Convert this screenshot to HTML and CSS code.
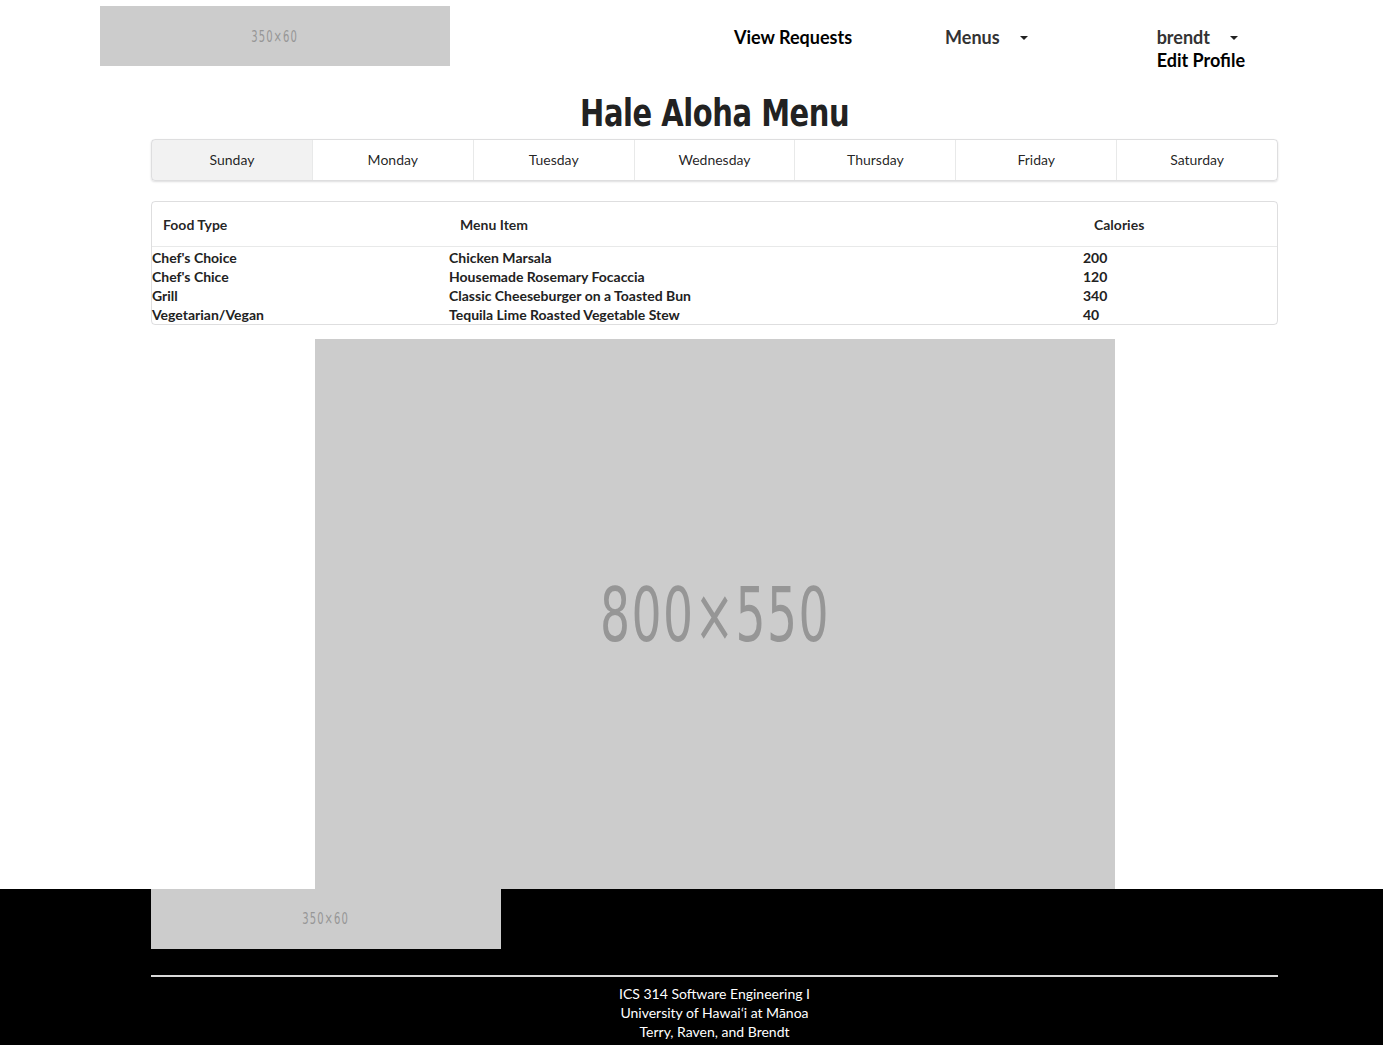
FILE: index.html
```html
<!DOCTYPE html>
<html lang="en">
<head>
<meta charset="utf-8">
<title>Hale Aloha Menu</title>
<link rel="stylesheet" href="styles.css">
</head>
<body>
<header class="topbar">
  <div class="placeholder logo"><span class="ph-text">350×60</span></div>
  <nav class="nav">
    <a class="nav-link strong" href="#">View Requests</a>
    <div class="nav-drop">
      <span class="drop-label">Menus</span>
      <span class="caret"></span>
    </div>
    <div class="nav-user">
      <div class="nav-drop">
        <span class="drop-label">brendt</span>
        <span class="caret"></span>
      </div>
      <a class="nav-link strong" href="#">Edit Profile</a>
    </div>
  </nav>
</header>

<main class="container">
  <h1 class="title"><span class="title-text">Hale Aloha Menu</span></h1>
  <div class="days">
    <a class="day active" href="#">Sunday</a>
    <a class="day" href="#">Monday</a>
    <a class="day" href="#">Tuesday</a>
    <a class="day" href="#">Wednesday</a>
    <a class="day" href="#">Thursday</a>
    <a class="day" href="#">Friday</a>
    <a class="day" href="#">Saturday</a>
  </div>

  <table class="menu-table">
    <colgroup>
      <col class="c1"><col class="c2"><col class="c3">
    </colgroup>
    <thead>
      <tr><th>Food Type</th><th>Menu Item</th><th>Calories</th></tr>
    </thead>
    <tbody>
      <tr class="first"><td>Chef's Choice</td><td>Chicken Marsala</td><td>200</td></tr>
      <tr><td>Chef's Chice</td><td>Housemade Rosemary Focaccia</td><td>120</td></tr>
      <tr><td>Grill</td><td>Classic Cheeseburger on a Toasted Bun</td><td>340</td></tr>
      <tr class="last"><td>Vegetarian/Vegan</td><td>Tequila Lime Roasted Vegetable Stew</td><td>40</td></tr>
    </tbody>
  </table>

  <div class="placeholder hero"><span class="ph-text hero-text">800×550</span></div>
</main>

<footer class="footer">
  <div class="container">
    <div class="placeholder flogo"><span class="ph-text">350×60</span></div>
    <hr class="rule">
    <div class="credits">
      ICS 314 Software Engineering I<br>
      University of Hawaiʻi at Mānoa<br>
      Terry, Raven, and Brendt
    </div>
  </div>
</footer>
</body>
</html>
```

FILE: styles.css
```css
* { box-sizing: border-box; }

html, body {
  margin: 0;
  padding: 0;
  background: #fff;
  font-family: Lato, "Helvetica Neue", Arial, sans-serif;
  font-size: 14px;
  color: rgba(0, 0, 0, 0.87);
}

.placeholder {
  background: #cccccc;
  color: #969696;
  display: flex;
  align-items: center;
  justify-content: center;
  font-family: "DejaVu Sans Condensed", "DejaVu Sans", sans-serif;
  font-stretch: condensed;
}

.ph-text {
  display: inline-block;
  transform: scaleX(0.74);
}

.hero-text {
  transform: scaleX(0.71);
}

/* top bar */
.topbar {
  display: flex;
  align-items: flex-start;
  padding: 6px 0 0 100px;
  height: 88px;
}

.logo {
  width: 350px;
  height: 60px;
  font-size: 15px;
  letter-spacing: 1.5px;
  padding-top: 2px;
}

.nav {
  display: flex;
  align-items: flex-start;
  padding-top: 20px;
  margin-left: 284px;
  font-size: 18px;
  line-height: 23px;
}

.nav-link {
  text-decoration: none;
  color: #000;
}

.nav-link.strong { font-weight: 700; }

.nav-drop {
  display: flex;
  align-items: center;
  color: #333;
  font-weight: 700;
}

.nav > .nav-drop { margin-left: 93px; }

.caret {
  display: inline-block;
  width: 0;
  height: 0;
  border-left: 4px solid transparent;
  border-right: 4px solid transparent;
  border-top: 4.5px solid #222;
  margin-left: 20px;
  margin-top: 1px;
}

.nav-user {
  margin-left: 129px;
  display: flex;
  flex-direction: column;
}

/* main */
.container {
  width: 1127px;
  margin-left: 151px;
}

.title {
  margin: 0;
  text-align: center;
  font-family: "DejaVu Sans Condensed", "DejaVu Sans", sans-serif;
  font-stretch: condensed;
  font-weight: 700;
  font-size: 37px;
  line-height: 51px;
  color: #222;
  letter-spacing: -0.5px;
}

.title-text {
  display: inline-block;
  transform: scaleX(0.87);
}

.days {
  display: flex;
  border: 1px solid rgba(34, 36, 38, 0.15);
  border-radius: 4px;
  box-shadow: 0 1px 2px 0 rgba(34, 36, 38, 0.15);
  height: 42px;
  overflow: hidden;
}

.day {
  flex: 1 1 0;
  display: flex;
  align-items: center;
  justify-content: center;
  text-decoration: none;
  color: rgba(0, 0, 0, 0.87);
  font-size: 14px;
  padding-bottom: 1px;
  border-left: 1px solid rgba(34, 36, 38, 0.1);
}

.day:first-child { border-left: none; }

.day.active { background: rgba(0, 0, 0, 0.05); }

.menu-table {
  margin-top: 20px;
  width: 100%;
  border-collapse: separate;
  border-spacing: 0;
  border: 1px solid rgba(34, 36, 38, 0.15);
  border-radius: 4px;
  table-layout: fixed;
  font-size: 14px;
}

.c1 { width: 297px; }
.c2 { width: 634px; }
.c3 { width: auto; }

.menu-table th {
  text-align: left;
  font-weight: 700;
  padding: 13px 11px 12px;
  line-height: 19px;
  color: rgba(0, 0, 0, 0.87);
  border-bottom: 1px solid rgba(34, 36, 38, 0.1);
}

.menu-table td {
  padding: 0;
  font-weight: 700;
  line-height: 19px;
  color: #222;
  white-space: nowrap;
}

.menu-table tr.first td { padding-top: 1px; }

.hero {
  width: 800px;
  height: 550px;
  margin: 14px auto 0;
  font-size: 74px;
  letter-spacing: 2px;
  padding-top: 2px;
}

/* footer */
.footer {
  background: #000;
  color: #fff;
  padding-bottom: 8px;
}

.flogo {
  width: 350px;
  height: 60px;
  font-size: 15px;
  letter-spacing: 1.5px;
}

.rule {
  margin: 26px 0 0;
  border: none;
  border-top: 2px solid #d9d9d9;
  height: 0;
}

.credits {
  text-align: center;
  font-size: 14px;
  line-height: 19px;
  padding-top: 7px;
}
```
